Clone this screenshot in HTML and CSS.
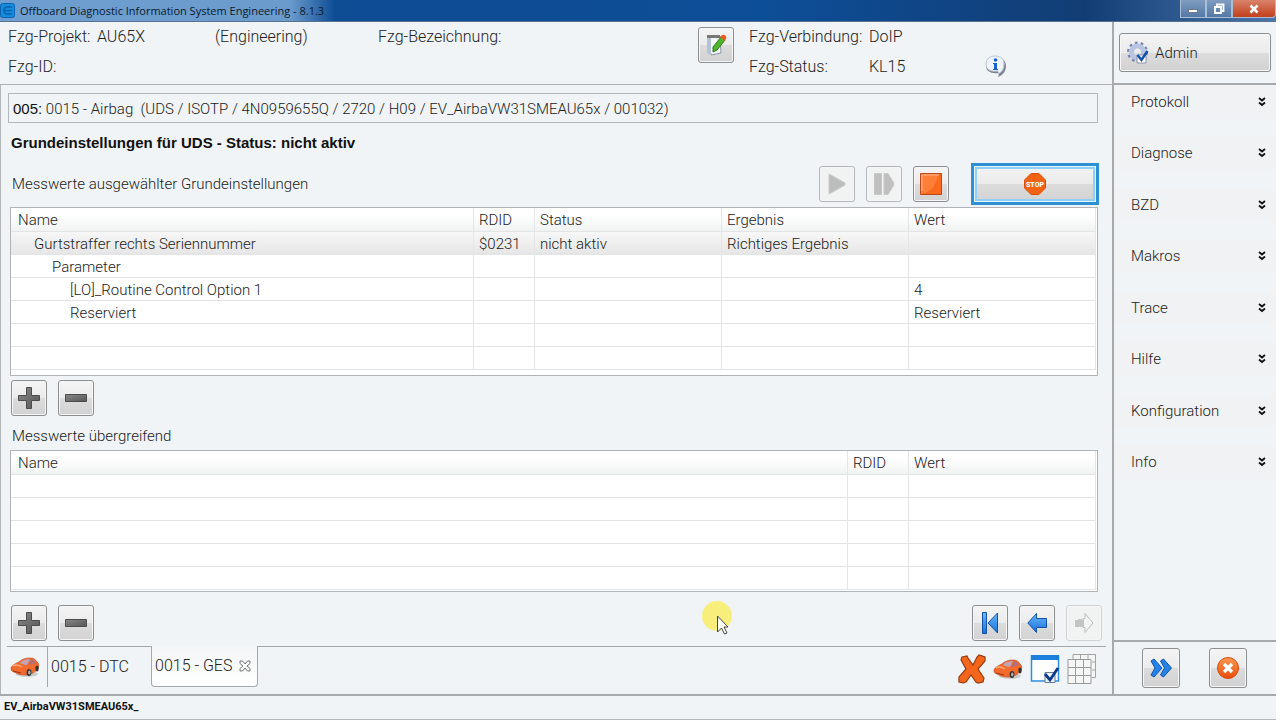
FILE: index.html
```html
<!DOCTYPE html>
<html lang="de">
<head>
    <meta charset="UTF-8">
    <title>Offboard Diagnostic Information System Engineering - 8.1.3</title>
    <link rel="stylesheet" href="styles.css">
</head>
<body>
    <!-- shared icons -->
    <svg class="defs" width="0" height="0" aria-hidden="true">
        <defs>
            <linearGradient id="orange" x1="0" y1="0" x2="0" y2="1">
                <stop offset="0" stop-color="#ff9a50"/>
                <stop offset="1" stop-color="#e84c0c"/>
            </linearGradient>
            <linearGradient id="blue" x1="0" y1="0" x2="0" y2="1">
                <stop offset="0" stop-color="#6cb8fa"/>
                <stop offset="1" stop-color="#1670dc"/>
            </linearGradient>
            <linearGradient id="dark" x1="0" y1="0" x2="1" y2="1">
                <stop offset="0" stop-color="#888"/>
                <stop offset="1" stop-color="#555"/>
            </linearGradient>
        </defs>
        <symbol id="plus" viewBox="0 0 22 22">
            <path d="M8.500.5h5v8h8v5h-8v8h-5v-8h-8v-5h8z" fill="url(#dark)" stroke="#4c4c4c"/>
        </symbol>
        <symbol id="minus" viewBox="0 0 22 22">
            <path d="M.5 7.500h21v7H.5z" fill="url(#dark)" stroke="#4c4c4c"/>
        </symbol>
        <symbol id="car" viewBox="0 0 30 22">
            <ellipse cx="17" cy="18" rx="11" ry="3" fill="#c9cccd"/>
            <path d="M1 12c1-3 4-4 8-6 3-3 7-4 11-4 4 0 6 2 7 4 2 1 2 5 1 7l-5 4-7 2c-5 0-9-1-12-3-3-1-3-2-3-4z" fill="#f26a2e" stroke="#c84c1c" stroke-width=".7"/>
            <path d="M10 7c2-3 6-4 10-4l-3 6c-3 0-5-1-7-2z" fill="#c3a3b6"/>
            <path d="M21 3c2 0 4 2 5 4l-8 2z" fill="#b4707a"/>
            <path d="M3 10c3-2 6-1 9 1" fill="none" stroke="#ffa878" stroke-width="1.500"/>
            <path d="M3 15l8 2" stroke="#9c3410"/>
            <ellipse cx="19" cy="16.500" rx="2.400" ry="3.500" fill="#333"/>
            <ellipse cx="19.300" cy="16.500" rx="1.200" ry="2" fill="#b4b4b4"/>
            <ellipse cx="27" cy="12.500" rx="1.600" ry="3" fill="#333"/>
        </symbol>
        <symbol id="chevrons" viewBox="0 0 8 10">
            <path d="M1 1l3 2.500L7 1M1 5.500L4 8l3-2.500" fill="none" stroke="#111" stroke-width="1.800"/>
        </symbol>
    </svg>

    <div class="app">
        <header class="titlebar">
            <svg class="app-icon" width="15" height="15" viewBox="0 0 15 15">
                <rect x=".5" y=".5" width="14" height="14" rx="2" fill="#158be0" stroke="#0b62b0"/>
                <path d="M12 4H6L4 6v3l2 2h6M5 7.500h7" fill="none" stroke="#0a62ac" stroke-width="1.500"/>
            </svg>
            <span class="title">Offboard Diagnostic Information System Engineering - 8.1.3</span>
            <div class="window-buttons">
                <button type="button" aria-label="Minimieren"><svg width="12" height="10" viewBox="0 0 12 10"><path d="M1.500 5.500h9v3h-9z" fill="#fff" stroke="#555" stroke-width=".7"/></svg></button>
                <button type="button" aria-label="Wiederherstellen"><svg width="12" height="12" viewBox="0 0 12 12"><path d="M4 3V1.500h6.500V8H9M2 4h6v6H2z" fill="none" stroke="#fff" stroke-width="1.800"/></svg></button>
                <button type="button" class="close" aria-label="Schließen"><svg width="10" height="10" viewBox="0 0 10 10"><path d="M1.500 1.500l7 7M8.500 1.500l-7 7" stroke="#fff" stroke-width="2.600"/></svg></button>
            </div>
        </header>

        <div class="columns">
            <main class="main">
                <section class="vehicle">
                    <dl class="project">
                        <dt>Fzg-Projekt:</dt><dd>AU65X</dd><dd>(Engineering)</dd>
                        <dt>Fzg-ID:</dt>
                    </dl>
                    <div class="designation">Fzg-Bezeichnung:</div>
                    <button type="button" class="btn" aria-label="Bearbeiten">
                        <svg width="22" height="24" viewBox="0 0 22 24">
                            <path d="M3 4l12-1 1 17-10 2z" fill="#f4f7fb" stroke="#8c98a8"/>
                            <path d="M2 4l4 1v17l-4-2z" fill="#b3c2d6"/>
                            <path d="M2 2h13v3H2z" fill="#777"/>
                            <path d="M16 4l4 3-8 10-4 2 0-5z" fill="#4fb52c" stroke="#2f7a1c"/>
                            <path d="M15 4q3-4 6-1 1 2-1 5z" fill="#ee5a24"/>
                        </svg>
                    </button>
                    <dl class="connection">
                        <dt>Fzg-Verbindung:</dt><dd>DoIP</dd>
                        <dt>Fzg-Status:</dt><dd>KL15</dd>
                    </dl>
                    <svg class="info" width="22" height="24" viewBox="0 0 22 24">
                        <path d="M10 2c6 0 11 3 11 9 0 5-3 9-8 11 1-2 1-3 0-4-7 1-12-2-12-7 0-6 4-9 9-9z" fill="#7d8491"/>
                        <path d="M10 1c6 0 9 3 9 8s-2 8-6 10c1-2 0-3-1-3-7 1-11-2-11-7s4-8 9-8z" fill="#eff3fb" stroke="#b9c3d3"/>
                        <path d="M8 8h4v6h1v1H8v-1h1V9H8z" fill="#1760d0"/><circle cx="10.500" cy="5" r="1.800" fill="#1760d0"/>
                    </svg>
                </section>

                <section class="content">
                    <div class="ecu"><b>005:</b> 0015 - Airbag&nbsp; (UDS / ISOTP / 4N0959655Q / 2720 / H09 / EV_AirbaVW31SMEAU65x / 001032)</div>
                    <h1>Grundeinstellungen für UDS - Status: nicht aktiv</h1>

                    <div class="toolbar">
                        <h2>Messwerte ausgewählter Grundeinstellungen</h2>
                        <button type="button" class="btn" disabled aria-label="Start">
                            <svg width="18" height="22" viewBox="0 0 18 22"><path d="M1 1l16 9v2L1 21z" fill="#bdbdbd" stroke="#c8c8c8"/></svg>
                        </button>
                        <button type="button" class="btn" disabled aria-label="Schritt">
                            <svg width="20" height="22" viewBox="0 0 20 22"><path d="M.5.5h7v21h-7zM10 .5h4l5.500 9v3l-5.500 9h-4z" fill="#bfbfbf" stroke="#c8c8c8"/></svg>
                        </button>
                        <button type="button" class="btn" aria-label="Beenden">
                            <svg width="22" height="22" viewBox="0 0 22 22"><path d="M.5.5h21v21H.5z" fill="#fb6a1c" stroke="#b84a1c"/><path d="M1 21Q16 18 18 1H1z" fill="#ff8d4c" opacity=".6"/><path d="M2 18V2h17" fill="none" stroke="#ffb68c"/></svg>
                        </button>
                        <button type="button" class="btn stop" aria-label="Stop">
                            <svg width="22" height="22" viewBox="0 0 22 22">
                                <path d="M7 .5h8L21.500 7v8L15 21.500H7L.5 15V7z" fill="#f26414" stroke="#dc5008"/>
                                <text x="11" y="14" text-anchor="middle">STOP</text>
                            </svg>
                        </button>
                    </div>

                    <table class="grid">
                        <colgroup><col><col class="c-id"><col class="c-mid"><col class="c-mid"><col class="c-mid"></colgroup>
                        <thead>
                            <tr><th>Name</th><th>RDID</th><th>Status</th><th>Ergebnis</th><th>Wert</th></tr>
                        </thead>
                        <tbody>
                            <tr class="selected"><td class="level1">Gurtstraffer rechts Seriennummer</td><td>$0231</td><td>nicht aktiv</td><td>Richtiges Ergebnis</td><td></td></tr>
                            <tr><td class="level2">Parameter</td><td></td><td></td><td></td><td></td></tr>
                            <tr><td class="level3">[LO]_Routine Control Option 1</td><td></td><td></td><td></td><td>4</td></tr>
                            <tr><td class="level3">Reserviert</td><td></td><td></td><td></td><td>Reserviert</td></tr>
                            <tr><td></td><td></td><td></td><td></td><td></td></tr>
                            <tr><td></td><td></td><td></td><td></td><td></td></tr>
                        </tbody>
                    </table>

                    <div class="actions">
                        <button type="button" class="btn" aria-label="Hinzufügen"><svg width="22" height="22"><use href="#plus"/></svg></button>
                        <button type="button" class="btn" aria-label="Entfernen"><svg width="22" height="22"><use href="#minus"/></svg></button>
                    </div>

                    <h2>Messwerte übergreifend</h2>
                    <table class="grid overall">
                        <colgroup><col><col class="c-id"><col class="c-mid"></colgroup>
                        <thead>
                            <tr><th>Name</th><th>RDID</th><th>Wert</th></tr>
                        </thead>
                        <tbody>
                            <tr><td></td><td></td><td></td></tr>
                            <tr><td></td><td></td><td></td></tr>
                            <tr><td></td><td></td><td></td></tr>
                            <tr><td></td><td></td><td></td></tr>
                            <tr><td></td><td></td><td></td></tr>
                        </tbody>
                    </table>

                    <div class="actions bottom">
                        <button type="button" class="btn" aria-label="Hinzufügen"><svg width="22" height="22"><use href="#plus"/></svg></button>
                        <button type="button" class="btn" aria-label="Entfernen"><svg width="22" height="22"><use href="#minus"/></svg></button>
                        <span class="spacer"></span>
                        <button type="button" class="btn" aria-label="Anfang">
                            <svg width="18" height="24" viewBox="0 0 18 24"><path d="M1.500 1.500h4v21h-4zM16.500 2v20L7 12z" fill="url(#blue)" stroke="#1252a8"/></svg>
                        </button>
                        <button type="button" class="btn" aria-label="Zurück">
                            <svg width="20" height="22" viewBox="0 0 20 22"><path d="M.8 11L9.500 1.500v5h10v9h-10v5z" fill="url(#blue)" stroke="#1252a8"/></svg>
                        </button>
                        <button type="button" class="btn faint" disabled aria-label="Weiter">
                            <svg width="20" height="22" viewBox="0 0 20 22"><path d="M19 11l-8-9.500v5H9v9h2v5z" fill="#f4f4f4" stroke="#bdbdbd"/><path d="M1 8h3V7h4v1h2v7H1z" fill="#c4c4c4"/></svg>
                        </button>
                    </div>
                </section>

                <nav class="tabs">
                    <a href="#" class="tab-car" aria-label="Fahrzeug"><svg width="30" height="22"><use href="#car"/></svg></a>
                    <a href="#" class="tab">0015 - DTC</a>
                    <a href="#" class="tab active">0015 - GES
                        <svg width="12" height="12" viewBox="0 0 12 12"><path d="M1 1h2.500L6 4l2.500-3H11v2.500L8 6l3 2.500V11H8.500L6 8l-2.500 3H1V8.500L4 6 1 3.500z" fill="#fff" stroke="#777"/></svg>
                    </a>
                    <div class="tab-tools">
                        <svg width="28" height="30" viewBox="0 0 28 30"><path d="M4 3l5-1 1 2 5 7 4-8 2-2 6 2v4l-7 8 6 9-1 4-5 1-2-1-5-7-5 7-3 1-4-1v-5l7-8-5-9z" fill="#f4661c" stroke="#963a10" stroke-width="1.200"/></svg>
                        <svg width="30" height="22"><use href="#car"/></svg>
                        <svg width="30" height="30" viewBox="0 0 30 30"><path d="M1.500 2h27v25h-27z" fill="#fff" stroke="#2d8ee0" stroke-width="1.500"/><path d="M1 1h28v5H1z" fill="#1c7fdc"/><path d="M15 18.500h10v10H15z" fill="#eef3fa" stroke="#6a7d98"/><path d="M15 20l5 6 8-12" fill="none" stroke="#0b3a8c" stroke-width="2.800"/></svg>
                        <svg width="30" height="30" viewBox="0 0 30 30"><path d="M6 5V.5h22.500v23H25M13.500.5V5M21 .5V5M25 8h3.500M25 16h3.500" fill="#f4f5f5" stroke="#a2a2a2"/><path d="M1 5.500h23v24H1zM8.500 5.500v24M16.500 5.500v24M1 13.500h23M1 21.500h23" fill="#f5f6f6" stroke="#9a9a9a"/></svg>
                    </div>
                </nav>
            </main>

            <aside class="sidebar">
                <div class="user">
                    <button type="button" class="btn admin">
                        <svg width="22" height="24" viewBox="0 0 22 24">
                            <circle cx="10.500" cy="11" r="8.500" fill="none" stroke="#7484ae" stroke-width="4" stroke-dasharray="2.500 2.840"/>
                            <circle cx="10.500" cy="11" r="6" fill="none" stroke="#b9c4e2" stroke-width="5"/>
                            <path d="M10 14h9v8h-9z" fill="#fff" stroke="#8a95ab"/><path d="M10.500 14l4 5 6-9" fill="none" stroke="#1450a8" stroke-width="2.500"/>
                        </svg>
                        Admin
                    </button>
                </div>
                <nav class="menu">
                    <a href="#">Protokoll<svg width="8" height="10"><use href="#chevrons"/></svg></a>
                    <a href="#">Diagnose<svg width="8" height="10"><use href="#chevrons"/></svg></a>
                    <a href="#">BZD<svg width="8" height="10"><use href="#chevrons"/></svg></a>
                    <a href="#">Makros<svg width="8" height="10"><use href="#chevrons"/></svg></a>
                    <a href="#">Trace<svg width="8" height="10"><use href="#chevrons"/></svg></a>
                    <a href="#">Hilfe<svg width="8" height="10"><use href="#chevrons"/></svg></a>
                    <a href="#">Konfiguration<svg width="8" height="10"><use href="#chevrons"/></svg></a>
                    <a href="#">Info<svg width="8" height="10"><use href="#chevrons"/></svg></a>
                </nav>
                <div class="side-actions">
                    <button type="button" class="btn" aria-label="Weiter">
                        <svg width="22" height="20" viewBox="0 0 22 20"><path d="M1 3l3-2 8 9-8 9-3-2 4-7zM10.500 3l3-2 8 9-8 9-3-2 4-7z" fill="#2383e6" stroke="#1252a8"/></svg>
                    </button>
                    <button type="button" class="btn" aria-label="Abbrechen">
                        <svg width="24" height="24" viewBox="0 0 24 24"><circle cx="12" cy="12" r="10.500" fill="url(#orange)" stroke="#d8480c"/><path d="M8 8l8 8M16 8l-8 8" stroke="#fff" stroke-width="3.400"/></svg>
                    </button>
                </div>
            </aside>
        </div>

        <footer class="statusbar">EV_AirbaVW31SMEAU65x_</footer>
    </div>

    <svg class="pointer" width="32" height="36" viewBox="0 0 32 36" aria-hidden="true">
        <circle cx="16" cy="16" r="15" fill="#f7ee7c"/>
        <path d="M16.500 16v16l4-4 3 6 2.500-1-3-6H27z" fill="#fff" stroke="#444"/>
    </svg>
</body>
</html>
```

FILE: styles.css
```css
* {
    box-sizing: border-box;
}

body {
    margin: 0;
    background-color: white;
    color: #222;
    font-family: Roboto, Arial, sans-serif;
    font-size: 15px;
    font-weight: 300;
    line-height: 20px;
}

h1, h2, dl, dd {
    margin: 0;
}

h1 {
    padding-left: 3px;
    font-family: "Liberation Sans", Arial, sans-serif;
    font-size: 15px;
    line-height: 20px;
    color: #111;
}

h2 {
    padding-left: 4px;
    font-size: 15px;
    font-weight: 300;
    line-height: 20px;
}

a {
    color: inherit;
    text-decoration: none;
}

svg {
    display: block;
    flex: none;
}

.defs {
    position: absolute;
}

.app {
    display: flex;
    flex-direction: column;
    min-height: 100vh;
    margin-right: 4px;
    background-color: #f0f4f6;
}

/* title bar */
.titlebar {
    display: flex;
    align-items: center;
    height: 22px;
    background: linear-gradient(90deg, #6f9fd0 0, #6b9bcd 290px, #0e4c94 335px, #0d4e98 60%, #123d74 85%, #4b76ab 100%);
    border-bottom: 1px solid #58738f;
}

.title {
    flex: 1;
    padding-left: 5px;
    font-family: "Open Sans", sans-serif;
    font-size: 11px;
    font-weight: 400;
    color: #0a1a2c;
}

.window-buttons {
    display: flex;
    align-self: flex-start;
    height: 18px;
}

.window-buttons button {
    display: flex;
    align-items: center;
    justify-content: center;
    width: 26px;
    padding: 0;
    border: 1px solid #a9bdd4;
    border-top: none;
    background: linear-gradient(#7f9dc0, #5478a6);
}

.window-buttons .close {
    width: 44px;
    border-radius: 0 0 4px 0;
    background: linear-gradient(#d9826a, #c2401c);
}

/* buttons */
.btn {
    display: flex;
    align-items: center;
    justify-content: center;
    width: 36px;
    height: 36px;
    padding: 0;
    border: 1px solid #8c8f91;
    border-radius: 3px;
    background: linear-gradient(#f4f4f4 0, #ebebeb 50%, #dcdcdc 51%, #d2d2d2 100%);
    color: inherit;
    font: inherit;
    box-shadow: inset 0 0 0 1px #f6f6f6;
}

.btn:disabled {
    border-color: #b4b7b9;
    background: #f1f2f2;
}

.btn.faint {
    border-color: #d0d3d4;
}

/* page columns */
.columns {
    display: flex;
    flex: 1;
}

.main {
    display: flex;
    flex: 1;
    flex-direction: column;
    min-width: 0;
}

.vehicle {
    display: flex;
    height: 63px;
    padding: 5px 8px 0;
    border-bottom: 1px solid #aeb2b5;
    font-size: 16px;
}

.vehicle dl {
    display: grid;
    grid-auto-rows: 20px;
    row-gap: 10px;
}

.project {
    grid-template-columns: 89px 118px 163px;
}

.designation {
    flex: 1;
}

.connection {
    grid-template-columns: 120px 116px;
    margin-left: 15px;
}

.info {
    margin: 28px 97px 0 0;
}

.content {
    flex: 1;
    padding: 8px 14px 0 7px;
    border-left: 1px solid #b4b8bb;
}

.ecu {
    height: 30px;
    padding: 5px 4px;
    border: 1px solid #b4b8ba;
    margin-bottom: 10px;
}

.ecu b {
    font-family: "Liberation Sans", Arial, sans-serif;
    color: #111;
}

.toolbar {
    display: flex;
    align-items: center;
    gap: 11px;
    height: 42px;
    margin: 10px -1px 2px 0;
}

.toolbar h2 {
    flex: 1;
}

.stop {
    width: 128px;
    height: 42px;
    margin-left: 11px;
    border: 3px solid #2e8fd2;
    border-radius: 0;
    box-shadow: inset 0 0 0 1px #e4f5ff, inset 0 0 0 3px #8fd0f4;
}

.stop text {
    font-family: Roboto, sans-serif;
    font-size: 7px;
    font-weight: 900;
    fill: #fff;
}

/* measurement tables */
.grid {
    width: calc(100% - 2px);
    margin-left: 2px;
    padding: 0 1px 5px 0;
    table-layout: fixed;
    border-collapse: separate;
    border-spacing: 0;
    border: 1px solid #b0b4b6;
    background-color: white;
}

.grid.overall {
    padding-bottom: 1px;
}

.c-id {
    width: 61px;
}

.c-mid {
    width: 187px;
}

.grid th, .grid td {
    height: 23px;
    padding: 1px 5px 0;
    border-right: 1px solid #e4e6e7;
    border-bottom: 1px solid #e2e4e5;
    font-weight: 300;
    line-height: 20px;
    text-align: left;
    white-space: nowrap;
}

.grid th {
    height: 24px;
    background: linear-gradient(#fff 30%, #f1f3f3);
}

.grid th:first-child {
    padding-left: 7px;
}

.grid .selected td {
    background: linear-gradient(#f7f7f7, #e6e6e6);
}

.grid .level1 {
    padding-left: 23px;
}

.grid .level2 {
    padding-left: 41px;
}

.grid .level3 {
    padding-left: 59px;
}

.actions {
    display: flex;
    gap: 11px;
    margin: 4px 0 10px 3px;
}

.actions + h2 {
    margin-bottom: 4px;
}

.bottom {
    margin: 13px -4px 5px 3px;
}

.spacer {
    flex: 1;
}

/* editor tabs */
.tabs {
    display: flex;
    height: 48px;
    padding-left: 6px;
    border-left: 1px solid #b4b8bb;
    font-size: 16px;
}

.tab-car {
    display: flex;
    align-items: center;
    width: 41px;
    height: 41px;
    padding-left: 3px;
    border-top: 1px solid #a4a8ab;
    border-right: 1px solid #a4a8ab;
}

.tab {
    display: flex;
    align-items: center;
    gap: 7px;
    width: 103px;
    height: 41px;
    padding-left: 3px;
    border-top: 1px solid #a4a8ab;
}

.tab.active {
    width: 107px;
    border: 1px solid #a4a8ab;
    border-top: none;
    border-radius: 0 0 4px 4px;
    background: linear-gradient(#f2f5f6, #fff);
}

.tab-tools {
    display: flex;
    flex: 1;
    align-items: center;
    justify-content: flex-end;
    gap: 7px;
    height: 45px;
    margin-right: 6px;
    padding-right: 9px;
    border-top: 1px solid #a4a8ab;
}

/* sidebar */
.sidebar {
    display: flex;
    flex-direction: column;
    width: 164px;
    border-left: 2px solid #a6aaad;
}

.user {
    height: 63px;
    padding: 11px 5px 0;
    border-bottom: 2px solid #a6aaad;
}

.admin {
    justify-content: flex-start;
    gap: 6px;
    width: 100%;
    height: 39px;
    padding-left: 7px;
}

.menu {
    display: flex;
    flex-direction: column;
    justify-content: space-between;
    height: 394px;
}

.menu a {
    display: flex;
    align-items: center;
    justify-content: space-between;
    height: 34px;
    padding: 0 10px 0 17px;
    background-color: #f1f2f3;
}

.side-actions {
    display: flex;
    gap: 29px;
    height: 54px;
    margin-top: auto;
    padding: 6px 0 0 28px;
    border-top: 2px solid #a6aaad;
}

.side-actions .btn {
    width: 38px;
    height: 40px;
}

.statusbar {
    height: 26px;
    padding: 1px 4px;
    border-top: 2px solid #a6aaad;
    border-bottom: 1px solid #b4b8ba;
    font-size: 11px;
    font-weight: 700;
    color: #111;
}

/* highlighted mouse pointer */
.pointer {
    position: absolute;
    left: 701px;
    top: 600px;
}
```
